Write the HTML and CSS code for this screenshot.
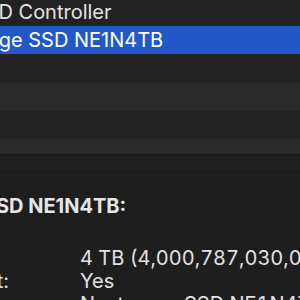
FILE: index.html
```html
<!DOCTYPE html>
<html lang="en">
<head>
  <meta charset="UTF-8">
  <title>System Information - NVMExpress</title>
  <link rel="stylesheet" href="styles.css">
</head>
<body>

<div class="list">
  <div class="row">Generic SSD Controller</div>
  <div class="row child selected">Nextorage SSD NE1N4TB</div>
  <div class="row"></div>
  <div class="row"></div>
  <div class="row"></div>
  <div class="row"></div>
</div>

<div class="splitter"></div>

<div class="detail">
  <div class="title">Nextorage SSD NE1N4TB:</div>
  <div class="props">
    <div class="prop"><span class="label">Capacity:</span><span class="value">4 TB (4,000,787,030,016 bytes)</span></div>
    <div class="prop"><span class="label">TRIM Support:</span><span class="value">Yes</span></div>
    <div class="prop"><span class="label">Model:</span><span class="value">Nextorage SSD NE1N4TB</span></div>
  </div>
</div>

</body>
</html>
```

FILE: styles.css
```css
body {
  margin: 0;
  padding: 0;
  width: 300px;
  height: 300px;
  overflow: hidden;
  background-color: #1e1e1e;
  font-family: Inter, 'Liberation Sans', Arial, sans-serif;
  color: #e2e2e2;
}
.list {
  height: 154px;
  overflow: hidden;
}
.row {
  height: 28.25px;
  line-height: 28.25px;
  font-size: 20px;
  white-space: nowrap;
  margin-left: -107px;
  background-color: #222222;
}
.row.child {
  padding-left: 31px;
}
.row:first-child {
  margin-top: -2.25px;
}
.row:nth-child(even) {
  background-color: #2a2a2a;
}
.row.selected {
  background-color: #2358c9;
  color: #ffffff;
}
.splitter {
  height: 16px;
  background-color: #202020;
  border-top: 1px solid #181818;
  border-bottom: 1px solid #181818;
}
.detail {
  margin-left: -124px;
  padding-top: 22px;
  font-size: 20px;
  white-space: nowrap;
}
.title {
  font-weight: bold;
  color: #e6e6e6;
}
.props {
  margin-top: 29px;
  margin-left: -3px;
}
.prop {
  display: flex;
  height: 23px;
  line-height: 23px;
}
.label {
  flex-shrink: 0;
  width: 207px;
}
.value {
  font-variant-numeric: tabular-nums;
}
```
